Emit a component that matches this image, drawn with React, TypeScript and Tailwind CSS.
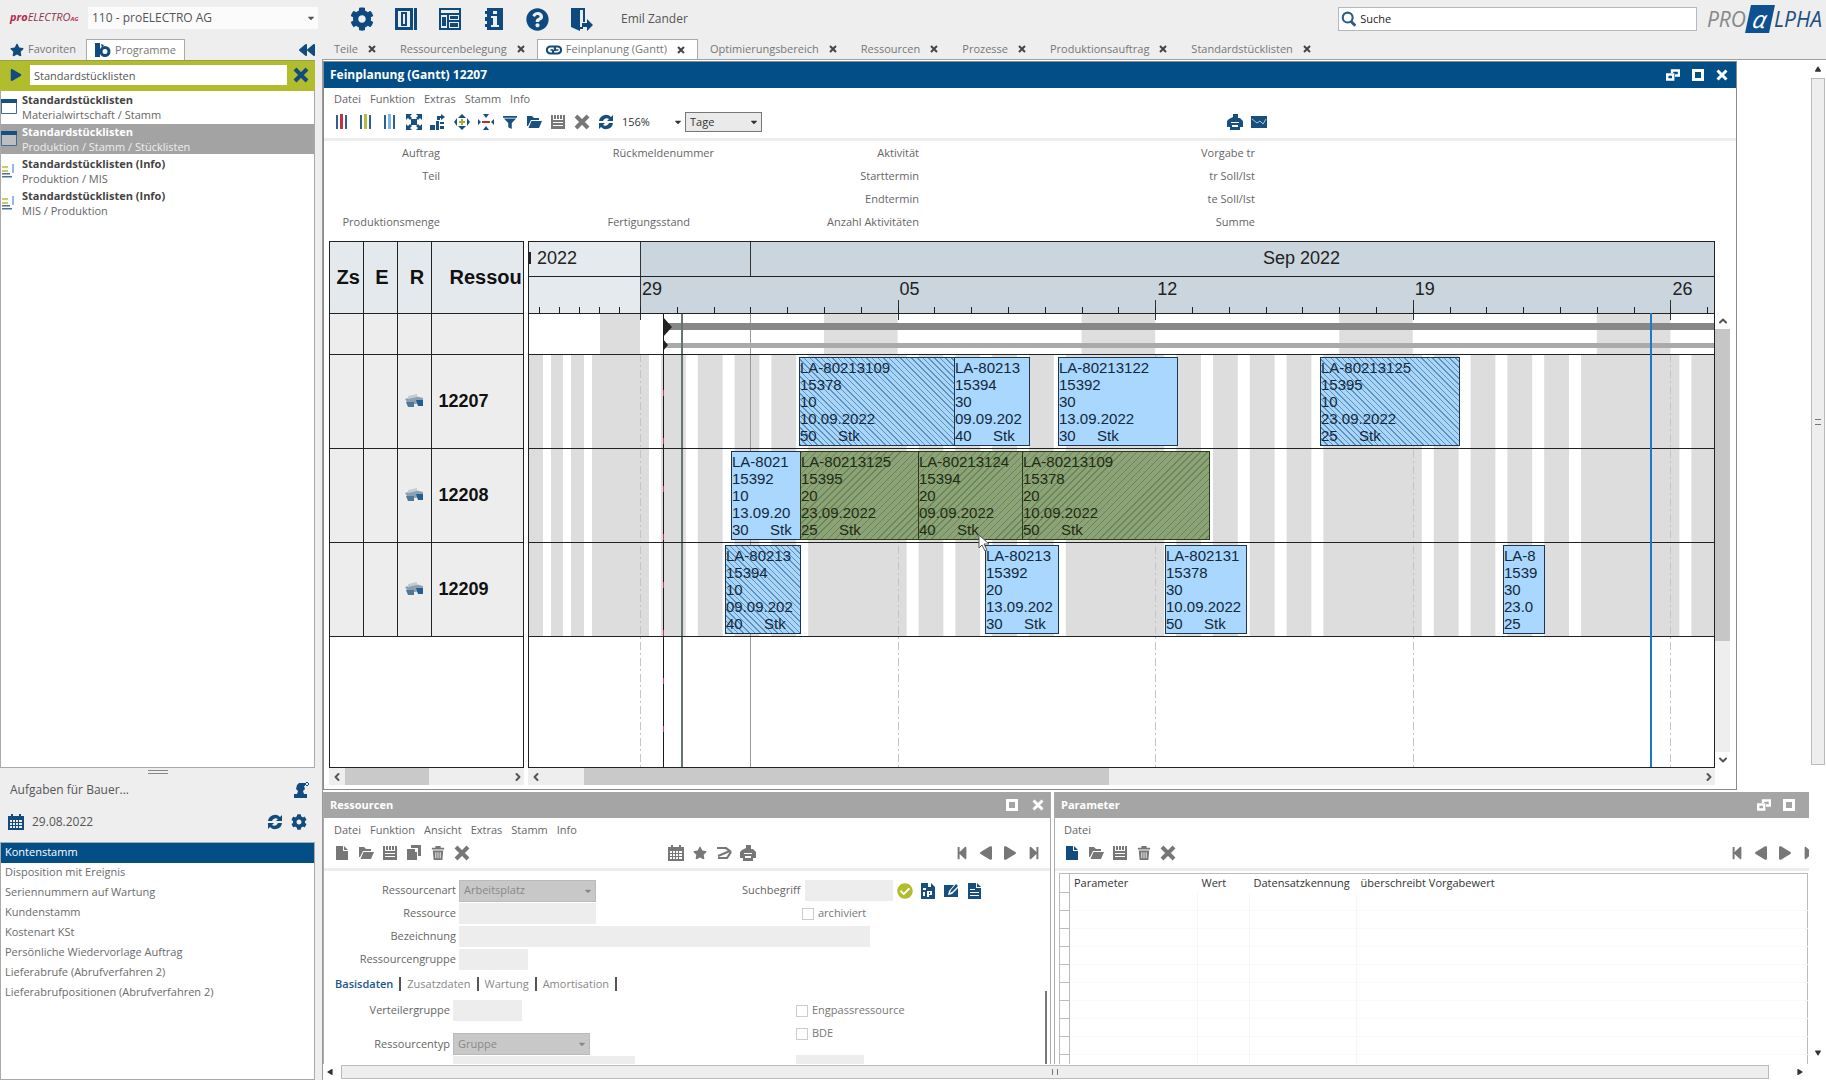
import type { ReactNode } from "react";
import {
  FaCog, FaQuestionCircle, FaStar, FaCaretDown, FaStepBackward, FaStepForward, FaPlay, FaCheckCircle, FaBackward,
} from "react-icons/fa";
import { ChevronDown, ChevronLeft, ChevronRight, ChevronUp } from "lucide-react";

interface Program {
  title: string;
  path: string;
  kind: "window" | "info";
  selected?: boolean;
}

interface Task {
  x: number;
  w: number;
  row: number;
  style: "plain" | "hatched" | "green";
  lines: string[];
  qty: string;
  unit: string;
}

const programs: Program[] = [
  { title: "Standardstücklisten", path: "Materialwirtschaft / Stamm", kind: "window" },
  { title: "Standardstücklisten", path: "Produktion / Stamm / Stücklisten", kind: "window", selected: true },
  { title: "Standardstücklisten (Info)", path: "Produktion / MIS", kind: "info" },
  { title: "Standardstücklisten (Info)", path: "MIS / Produktion", kind: "info" },
];

const todos = [
  "Kontenstamm", "Disposition mit Ereignis", "Seriennummern auf Wartung", "Kundenstamm", "Kostenart KSt",
  "Persönliche Wiedervorlage Auftrag", "Lieferabrufe (Abrufverfahren 2)", "Lieferabrufpositionen (Abrufverfahren 2)",
];

const tabs = [
  "Teile", "Ressourcenbelegung", "Feinplanung (Gantt)", "Optimierungsbereich", "Ressourcen",
  "Prozesse", "Produktionsauftrag", "Standardstücklisten",
];

const tasks: Task[] = [
  { x: 270, w: 156, row: 0, style: "hatched", lines: ["LA-80213109", "15378", "10", "10.09.2022"], qty: "50", unit: "Stk" },
  { x: 425, w: 76, row: 0, style: "plain", lines: ["LA-80213", "15394", "30", "09.09.202"], qty: "40", unit: "Stk" },
  { x: 529, w: 120, row: 0, style: "plain", lines: ["LA-80213122", "15392", "30", "13.09.2022"], qty: "30", unit: "Stk" },
  { x: 791, w: 140, row: 0, style: "hatched", lines: ["LA-80213125", "15395", "10", "23.09.2022"], qty: "25", unit: "Stk" },
  { x: 202, w: 70, row: 1, style: "plain", lines: ["LA-8021", "15392", "10", "13.09.20"], qty: "30", unit: "Stk" },
  { x: 271, w: 119, row: 1, style: "green", lines: ["LA-80213125", "15395", "20", "23.09.2022"], qty: "25", unit: "Stk" },
  { x: 389, w: 105, row: 1, style: "green", lines: ["LA-80213124", "15394", "20", "09.09.2022"], qty: "40", unit: "Stk" },
  { x: 493, w: 188, row: 1, style: "green", lines: ["LA-80213109", "15378", "20", "10.09.2022"], qty: "50", unit: "Stk" },
  { x: 196, w: 76, row: 2, style: "hatched", lines: ["LA-80213", "15394", "10", "09.09.202"], qty: "40", unit: "Stk" },
  { x: 456, w: 74, row: 2, style: "plain", lines: ["LA-80213", "15392", "20", "13.09.202"], qty: "30", unit: "Stk" },
  { x: 636, w: 82, row: 2, style: "plain", lines: ["LA-802131", "15378", "30", "10.09.2022"], qty: "50", unit: "Stk" },
  { x: 974, w: 42, row: 2, style: "plain", lines: ["LA-8", "1539", "30", "23.0"], qty: "25", unit: "" },
];

const taskStyles = {
  plain: "border-[#1d3550] bg-[#a9d7fd] text-[#14283c]",
  hatched: "border-[#1d3550] bg-[repeating-linear-gradient(45deg,#5c92bd_0_1px,#a9d5f8_1px_4px)] text-[#14283c]",
  green: "border-[#2c3b20] bg-[repeating-linear-gradient(135deg,#6c8557_0_1px,#8ca277_1px_5px)] text-[#1f2c14]",
};

// The calendar: first Monday of the fine scale and the width of a day
const FIRST_MONDAY = 111;
const DAY = 36.8;
const SUMMARY_TOP = 71;
const ROWS_TOP = 112;
const ROW_HEIGHT = 94;
const weeks = ["29", "05", "12", "19", "26"];
const resources = ["12207", "12208", "12209"];
const weekX = (week: number) => FIRST_MONDAY + week * 7 * DAY;

const iconPaths = {
  file: "M2 1h7v5h5v9H2zM10 1l4 4h-4z",
  folder: "M1 2h5l2 2h5v2H5L2 12H1zM5.500 7H16l-3 7H2.500z",
  save: "M1 1h2v5h10V1h2v14H1zM4 1h2v4H4zM7 1h2v4H7zM10 1h2v4h-2zM3 8v1h10V8zM3 11v1h10v-1z",
  copy: "M5 0h10v11h-3V3H5zM1 4h8v3h2v8H1z",
  trash: "M5 0h6v2h4v2H1V2h4zM2 5h12l-1 11H3zM5 7v7h1V7zM7.500 7v7h1V7zM10 7v7h1V7z",
  calendar: "M0 2h3V0h2v2h6V0h2v2h3v14H0zM2 6v2h2V6zM5 6v2h2V6zM8 6v2h2V6zM11 6v2h3V6zM2 9v2h2V9zM5 9v2h2V9zM8 9v2h2V9zM11 9v2h3V9zM2 12v2h2v-2zM5 12v2h2v-2zM8 12v2h2v-2zM11 12v2h3v-2z",
  print: "M4 4l2-1V0h5v4h2l3 3v6h-3v3H3v-3H0V7l2-2zM4 8v1h8V8zM5 11v2h6v-2z",
  filter: "M0 1h16v2H0zM1 4h14l-5 5v7l-4-2V9z",
  refresh: "M1 7a7 7 0 0112-4l2-2v6H9l2-2a4 4 0 00-6 2zM15 9a7 7 0 01-12 4l-2 2V9h6l-2 2a4 4 0 006-2z",
  user: "M8 1h4v3h-1l1 3-2 2 1 3h3v4H1v-4h3l1-3-2-2 1-4 2-2zM12 1h4v2h-4zM13 0h2v4h-2z",
  edit: "M1 2h10l-5 6-1 4 4-1 6-6v9H1zM13 1l2 2-6 6-2 1 1-3z",
  document: "M2 0h8v5h5v11H2zM11 0l4 4h-4zM4 6v1h5V6zM4 9v1h9V9zM4 12v1h9v-1z",
  texts: "M1 0h7v4h3V0l4 4v12H1zM3 5v2h3V5zM3 9v4h2V9zM7 8v6h2v-2h3V8H7zM9 9h1v2H9z",
};

function Icon({ name, className = "h-4 w-4" }: { name: keyof typeof iconPaths; className?: string }) {
  return (
    <svg viewBox="0 0 16 16" className={className} fill="currentColor">
      <path fillRule="evenodd" d={iconPaths[name]} />
    </svg>
  );
}

function ToolButton({ label, className = "", children }: { label: string; className?: string; children: ReactNode }) {
  return (
    <button type="button" aria-label={label} className={`flex h-4 w-4 shrink-0 items-center justify-center ${className}`}>
      {children}
    </button>
  );
}

function CrossIcon({ className = "" }: { className?: string }) {
  return (
    <svg viewBox="0 0 16 16" className={className} fill="none" stroke="currentColor" strokeWidth="4">
      <path d="M2 2l12 12M14 2L2 14" />
    </svg>
  );
}

function BarsIcon({ color }: { color: string }) {
  return (
    <svg viewBox="0 0 14 16" className="h-4 w-3.5">
      <path d="M1 1h2v14H1zM10 1h2v14h-2z" fill="#2f5f8c" />
      <path d="M5 0h3v15H5z" fill={color} />
    </svg>
  );
}

function FitIcon() {
  return (
    <svg viewBox="0 0 16 16" className="h-4 w-4" fill="#17507f">
      <path d="M0 0h6L4 2l2 2-2 2-2-2-2 2zM16 0v6l-2-2-2 2-2-2 2-2-2-2zM0 16v-6l2 2 2-2 2 2-2 2 2 2zM16 16h-6l2-2-2-2 2-2 2 2 2-2z" />
      <path d="M5 5h6v6H5z" />
    </svg>
  );
}

function StepsIcon() {
  return (
    <svg viewBox="0 0 16 16" className="h-4 w-4" fill="#17507f">
      <path d="M0 11h5v5H0zM6 7h3v9H6zM10 12h4v3h-4zM8 2h4v2h-2v2H7V2zM11 0l4 3-4 3zM10 8h4v2h-4z" />
    </svg>
  );
}

function SpreadIcon({ inward = false }: { inward?: boolean }) {
  return (
    <svg viewBox="0 0 16 16" className="h-4 w-4" fill="#17507f">
      {inward ? (
        <>
          <path d="M5 0h6L8 4zM5 16h6l-3-4zM0 5l3 3-3 3zM16 5l-3 3 3 3z" />
          <path d="M4 7h8v2H4z" fill="#c22b3b" />
        </>
      ) : (
        <>
          <path d="M8 0l4 4H4zM8 16l4-4H4zM0 8l3-4v8zM16 8l-3-4v8z" />
          <path d="M7 5h2v2h2v2H9v2H7V9H5V7h2z" fill="#a4b32a" />
        </>
      )}
    </svg>
  );
}

function LinkIcon() {
  return (
    <svg viewBox="0 0 18 14" className="h-3.5 w-4" fill="none" stroke="#124c7f" strokeWidth="2.400">
      <path d="M9 3H5a4 4 0 000 8h3V7M9 11h4a4 4 0 000-8h-3v5" />
      <path d="M5 7h3M10 7h4" strokeWidth="1.600" />
    </svg>
  );
}

function ProgramIcon({ kind }: { kind: Program["kind"] }) {
  if (kind === "window") {
    return (
      <svg viewBox="0 0 16 16" className="h-4 w-4 shrink-0">
        <path d="M0.500 1.500h15v13h-15z" fill="#fff" fillOpacity="0.300" stroke="#3f6d92" />
        <path d="M0 0h16v4H0z" fill="#17507f" />
      </svg>
    );
  }
  return (
    <svg viewBox="0 0 16 16" className="h-4 w-4 shrink-0">
      <path d="M1 3h6v2H1zM1 7h6v2H1z" fill="#c6ce6c" />
      <path d="M1 10h8v1.500H1zM1 13h10v1.500H1z" fill="#4a7393" />
      <path d="M11 1h2v9h-2z" fill="#8fbdeb" />
    </svg>
  );
}

function MachineIcon() {
  return (
    <svg viewBox="0 0 20 16" className="ml-1.5 h-4 w-5">
      <path d="M1 6l10-3 8 2v5l-8 1-8-2z" fill="#8ba0b1" />
      <path d="M2 9h8v5H4z" fill="#4d7898" />
      <path d="M12 7h7v6h-5z" fill="#215e91" />
      <path d="M4 3l9-2v3L4 6z" fill="#c3ccd3" />
    </svg>
  );
}

function RestoreIcon() {
  return (
    <svg viewBox="0 0 14 12" className="h-3 w-3.5" fill="none" stroke="currentColor" strokeWidth="2.400">
      <path d="M1.200 5.500h6v5h-6zM6 4V1.500h7v5H9" />
    </svg>
  );
}

function MaximizeIcon() {
  return (
    <svg viewBox="0 0 12 12" className="h-3 w-3" fill="none" stroke="currentColor" strokeWidth="3">
      <path d="M1.500 1.500h9v9h-9z" />
    </svg>
  );
}

function MenuBar({ items }: { items: string[] }) {
  return (
    <nav className="flex gap-[9px] text-[11px] leading-4 text-[#666]">
      {items.map(item => <button key={item} type="button">{item}</button>)}
    </nav>
  );
}

function SelectBox({ label, value, id, className = "" }: { label: string; value: string; id?: string; className?: string }) {
  return (
    <div className={`grid items-center ${className}`}>
      <select
        id={id}
        aria-label={label}
        defaultValue={value}
        className="col-start-1 row-start-1 h-full w-full appearance-none bg-transparent px-1 outline-none"
      >
        <option>{value}</option>
      </select>
      <FaCaretDown className="pointer-events-none col-start-1 row-start-1 mr-0.5 h-2.5 w-2.5 justify-self-end" />
    </div>
  );
}

function Header() {
  return (
    <header className="flex h-[39px] shrink-0 items-start bg-[#eee] text-xs text-[#555]">
      <div className="flex w-[322px] shrink-0 items-center pt-[7px]">
        <span className="w-[88px] pl-2.5 text-[11px] font-bold italic leading-5 text-[#b5274c]">
          pro<span className="font-normal text-[#8d3349]">ELECTRO</span>
          <span className="text-[6px]">AG</span>
        </span>
        <SelectBox label="Firma" value="110 - proELECTRO AG" className="h-[22px] w-[230px] bg-[#fbfbfb] text-[12px]" />
      </div>
      <div className="flex flex-1 items-center pt-[5px]">
        <div className="flex items-center gap-5 pl-7 text-[#0e4a80]">
          <button type="button" aria-label="Einstellungen"><FaCog className="h-6 w-6" /></button>
          <button type="button" aria-label="Spalten">
            <svg viewBox="0 0 24 24" className="h-6 w-6" fill="currentColor">
              <path fillRule="evenodd" d="M1 1h18v22H1zM4 4v16h12V4zM20 1h3v22h-3zM7 5h6v14H7zM9 7v10h2V7z" />
            </svg>
          </button>
          <button type="button" aria-label="Layout">
            <svg viewBox="0 0 24 24" className="h-6 w-6" fill="currentColor">
              <path fillRule="evenodd" d="M1 1h22v22H1zM3 3v3h18V3zM3 8v13h6V8zM11 8v5h10V8zM11 15v6h10v-6z" />
              <path d="M4 10h4v9H4zM12 9h8v3h-8zM12 16h8v4h-8z" />
            </svg>
          </button>
          <button type="button" aria-label="Info">
            <svg viewBox="0 0 24 24" className="h-6 w-6" fill="currentColor">
              <path fillRule="evenodd" d="M5 1h16v22H5v-3H3v-3h2v-3H3v-4h2V7H3V4h2zM11 4v3h4V4zM9 9v2h2v7H9v2h8v-2h-2V9z" />
            </svg>
          </button>
          <button type="button" aria-label="Hilfe"><FaQuestionCircle className="h-[23px] w-[23px]" /></button>
          <button type="button" aria-label="Abmelden">
            <svg viewBox="0 0 24 24" className="h-6 w-6" fill="currentColor">
              <path fillRule="evenodd" d="M2 1h14v14h-2V3h-3v17h3v2h-3v2L2 20z" />
              <path d="M13 16h5v-4l6 6-6 6v-4h-5z" />
            </svg>
          </button>
        </div>
        <span className="pl-7 text-[12px]">Emil Zander</span>
        <label className="ml-auto flex h-6 w-[359px] items-center border border-[#b5b9bd] bg-white pl-0.5">
          <svg viewBox="0 0 16 16" className="h-4 w-4" fill="none" stroke="#2c5c88" strokeWidth="2.200">
            <circle cx="7" cy="6.500" r="5.200" />
            <path d="M10 10l5 5" strokeWidth="3" />
          </svg>
          <input aria-label="Suche" defaultValue="Suche" className="w-full bg-transparent pl-1 text-[11px] text-[#222] outline-none" />
        </label>
        <div className="ml-2.5 mr-1 flex h-7 items-center text-[21px] font-medium italic text-[#1d4f80]">
          <span className="font-normal text-[#888]">PRO</span>
          <span className="mx-0.5 flex h-7 w-6 -skew-x-12 items-center justify-center bg-[#0e5190] text-[24px] text-white">α</span>
          <span>LPHA</span>
        </div>
      </div>
    </header>
  );
}

function Sidebar() {
  return (
    <aside className="flex w-[322px] shrink-0 flex-col bg-[#eee] pr-[7px] text-[11px] text-[#555]">
      <div className="flex h-[21px] shrink-0 items-center">
        <button type="button" className="flex items-center gap-1 pl-2.5 pr-2.5 text-[#777]">
          <FaStar className="h-3.5 w-3.5 text-[#124c7f]" />Favoriten
        </button>
        <button type="button" className="flex h-full items-center gap-1 border border-b-0 border-[#aaa] bg-white px-2 text-[#777]">
          <svg viewBox="0 0 16 14" className="h-3.5 w-4" fill="#124c7f">
            <path d="M0 0h5v14H0zM6 1l3 1-2 3z" />
            <path fillRule="evenodd" d="M10 3a5.500 5.500 0 100 11 5.500 5.500 0 000-11zm0 3a2.500 2.500 0 110 5 2.500 2.500 0 010-5z" />
          </svg>
          Programme
        </button>
        <button type="button" aria-label="Einklappen" className="ml-auto text-[#124c7f]"><FaBackward className="h-4 w-4" /></button>
      </div>
      <div className="flex h-[31px] shrink-0 items-start border-t border-[#9a9f4f] bg-[#b1bd2c] pt-1 text-[#124c7f]">
        <button type="button" aria-label="Starten" className="py-1 pl-2.5"><FaPlay className="h-3 w-3" /></button>
        <input
          aria-label="Programm suchen"
          defaultValue="Standardstücklisten"
          className="ml-2 h-5 min-w-0 flex-1 bg-white px-1 text-[11px] text-[#555] outline-none"
        />
        <button type="button" aria-label="Leeren" className="px-1.5 py-0.5"><CrossIcon className="h-4 w-4" /></button>
      </div>
      <ul className="min-h-0 flex-1 border-x border-b border-[#aaa] bg-white pt-px">
        {programs.map(p => (
          <li
            key={p.title + p.path}
            className={`mb-0.5 flex h-[30px] items-center gap-[5px] ${p.selected ? "bg-[#a3a3a3] text-[#eee]" : "text-[#666]"}`}
          >
            <ProgramIcon kind={p.kind} />
            <div className="leading-[15px]">
              <div className={`font-bold ${p.selected ? "text-white" : "text-[#444]"}`}>{p.title}</div>
              <div>{p.path}</div>
            </div>
          </li>
        ))}
      </ul>
      <div className="flex h-[74px] shrink-0 flex-col">
        <div className="mx-auto mt-0.5 h-1 w-5 border-y border-[#888]" />
        <div className="flex h-8 items-center justify-between pl-2.5 pr-1.5 text-[12px]">
          <span>Aufgaben für Bauer...</span>
          <ToolButton label="Benutzer zuordnen" className="text-[#124c7f]"><Icon name="user" /></ToolButton>
        </div>
        <div className="flex h-8 items-center pl-2 pr-2 text-[#124c7f]">
          <Icon name="calendar" />
          <span className="flex-1 pl-2 text-[12px] text-[#555]">29.08.2022</span>
          <ToolButton label="Aktualisieren"><Icon name="refresh" /></ToolButton>
          <ToolButton label="Einstellungen" className="ml-2"><FaCog className="h-4 w-4" /></ToolButton>
        </div>
      </div>
      <ul className="h-[238px] shrink-0 border border-[#aaa] bg-white text-[11px] leading-[18px] text-[#6b6b6b]">
        {todos.map((t, i) => (
          <li key={t} className={`h-5 pl-1 ${i === 0 ? "bg-[#044e87] text-white" : ""}`}>{t}</li>
        ))}
      </ul>
    </aside>
  );
}

function TabStrip() {
  return (
    <div className="flex h-[21px] shrink-0 items-stretch border-b border-[#9aa3ab] bg-[#eee] text-[11px] text-[#777]">
      {tabs.map(tab => {
        const active = tab.startsWith("Feinplanung");
        return (
          <div
            key={tab}
            className={active
              ? "flex items-center gap-2.5 border border-b-0 border-[#aaa] bg-white pl-2 pr-3"
              : "flex items-center gap-2.5 px-3"}
          >
            <button type="button" className="flex items-center gap-1">{active && <LinkIcon />}{tab}</button>
            <button type="button" aria-label={`${tab} schließen`} className="text-[#444]"><CrossIcon className="h-2 w-2" /></button>
          </div>
        );
      })}
    </div>
  );
}

function TimelineChart() {
  const days = Array.from({ length: 30 }, (_, i) => i);
  const workDays = days.filter(d => d % 7 < 5);
  return (
    <svg className="absolute inset-0 h-full w-full">
      <rect width="100%" height={SUMMARY_TOP} fill="#cad5de" />
      <rect width="111" height={SUMMARY_TOP} fill="#e5eaee" />
      <rect x="71" y={SUMMARY_TOP} width="40" height="41" fill="#ddd" />
      {[0, 1, 2, 3].map(w => (
        <rect key={w} x={weekX(w) + 5 * DAY} y={SUMMARY_TOP} width={2 * DAY} height="41" fill="#dedede" />
      ))}
      {resources.map((r, i) => (
        <g key={r}>
          <rect y={ROWS_TOP + i * ROW_HEIGHT} width="100%" height={ROW_HEIGHT} fill="#ddd" />
          {[14, 34, 55].map(x => (
            <rect key={x} x={x} y={ROWS_TOP + i * ROW_HEIGHT} width="8" height={ROW_HEIGHT} fill="#fff" />
          ))}
          {workDays.map(d => (
            <rect key={d} x={FIRST_MONDAY + d * DAY + 9} y={ROWS_TOP + i * ROW_HEIGHT} width="12" height={ROW_HEIGHT} fill="#fff" />
          ))}
        </g>
      ))}
      {weeks.map((w, i) => (
        <g key={w}>
          <path d={`M${Math.round(weekX(i))}.5 112V600`} stroke="#c4c4c4" strokeDasharray="8 3 2 3" />
          <path d={`M${Math.round(weekX(i))}.5 ${i === 0 ? 0 : 58}V78`} stroke="#333" />
        </g>
      ))}
      {days.map(d => (
        <path key={d} d={`M${Math.round(FIRST_MONDAY + d * DAY)}.5 65V71`} stroke="#222" />
      ))}
      {[10, 30, 50, 70, 90].map(x => <path key={x} d={`M${x}.5 65V71`} stroke="#222" />)}
      <path d="M221.500 0V34" stroke="#333" />
      <path d="M221.500 71V600" stroke="#999" />
      <rect x="134" y="81" width="100%" height="7" fill="#878787" />
      <rect x="134" y="101" width="100%" height="5" fill="#aaa" />
      <path d="M134 75l9 10-9 10zM134 97l5 6-5 6z" fill="#222" />
      <path d="M134.500 71V600" stroke="#1a1a1a" />
      <path d="M134.500 148V600" stroke="#c43a52" strokeDasharray="6 42" />
      <path d="M153 71V600" stroke="#66766a" strokeWidth="2" />
      <path d="M0 34.500H3000M0 71.500H3000M0 112.500H3000M0 206.500H3000M0 300.500H3000M0 394.500H3000" stroke="#222" />
      <path d="M1122 71V600" stroke="#1f78c6" strokeWidth="2" />
    </svg>
  );
}

function Timeline() {
  return (
    <div className="relative min-w-0 flex-1 overflow-hidden border border-[#222] bg-white font-['Liberation_Sans',Arial,sans-serif]">
      <TimelineChart />
      <span className="absolute left-2 top-1.5 text-[18px] leading-5 text-[#222]">2022</span>
      <span className="absolute left-0 top-2.5 h-3 w-0.5 bg-[#222]" />
      <span className="absolute left-[734px] top-1.5 text-[18px] leading-5 text-[#222]">Sep 2022</span>
      {weeks.map((w, i) => (
        <span key={w} className="absolute top-[37px] text-[18px] leading-5 text-[#222]" style={{ left: weekX(i) + 2 }}>{w}</span>
      ))}
      {tasks.map(t => (
        <div
          key={`${t.row}-${t.x}`}
          className={`absolute flex h-[89px] flex-col border pt-px text-[15px] leading-[17px] ${taskStyles[t.style]}`}
          style={{ left: t.x, top: ROWS_TOP + 3 + t.row * ROW_HEIGHT, width: t.w }}
        >
          {t.lines.map(line => <div key={line} className="whitespace-nowrap">{line}</div>)}
          <div className="flex"><span className="w-[38px]">{t.qty}</span>{t.unit}</div>
        </div>
      ))}
      <svg viewBox="0 0 12 18" className="absolute left-[449px] top-[292px] h-[18px] w-3">
        <path d="M1 1v13l3-3 3 6 2-1-3-6h5z" fill="#fff" stroke="#555" />
      </svg>
    </div>
  );
}

function ResourceTable() {
  return (
    <div className="w-[195px] shrink-0 overflow-hidden border border-[#222] bg-white font-['Liberation_Sans',Arial,sans-serif]">
      <table className="w-full table-fixed border-collapse text-[#111]">
        <thead>
          <tr className="h-[71px] border-b border-[#222] bg-[#e4e9ed] text-[20px]">
            <th className="w-[33px] border-r border-[#222] pl-1">Zs</th>
            <th className="w-[34px] border-r border-[#222] pl-1">E</th>
            <th className="w-[34px] border-r border-[#222] pl-1.5">R</th>
            <th className="overflow-hidden pl-[18px] text-left">Ressou</th>
          </tr>
        </thead>
        <tbody className="bg-[#ededed]">
          <tr className="h-[41px] border-b border-[#222]">
            <td className="border-r border-[#222]" />
            <td className="border-r border-[#222]" />
            <td className="border-r border-[#222]" />
            <td />
          </tr>
          {resources.map(r => (
            <tr key={r} className="h-[94px] border-b border-[#222]">
              <td className="border-r border-[#222]" />
              <td className="border-r border-[#222]" />
              <td className="border-r border-[#222]"><MachineIcon /></td>
              <td className="pl-[7px] text-[18px] font-bold">{r}</td>
            </tr>
          ))}
        </tbody>
      </table>
    </div>
  );
}

function GanttToolbar() {
  return (
    <div className="flex h-6 items-center gap-2 text-[#17507f]">
      <ToolButton label="Rote Balken"><BarsIcon color="#c8323f" /></ToolButton>
      <ToolButton label="Grüne Balken"><BarsIcon color="#b5bd3c" /></ToolButton>
      <ToolButton label="Blaue Balken"><BarsIcon color="#7db4ea" /></ToolButton>
      <ToolButton label="Einpassen"><FitIcon /></ToolButton>
      <ToolButton label="Stufen"><StepsIcon /></ToolButton>
      <ToolButton label="Vergrößern"><SpreadIcon /></ToolButton>
      <ToolButton label="Verkleinern"><SpreadIcon inward /></ToolButton>
      <ToolButton label="Filter"><Icon name="filter" className="h-3.5 w-3.5" /></ToolButton>
      <ToolButton label="Öffnen"><Icon name="folder" /></ToolButton>
      <ToolButton label="Speichern" className="text-[#777]"><Icon name="save" /></ToolButton>
      <ToolButton label="Abbrechen" className="text-[#777]"><CrossIcon className="h-4 w-4" /></ToolButton>
      <ToolButton label="Aktualisieren"><Icon name="refresh" /></ToolButton>
      <SelectBox label="Zoom" value="156%" className="-ml-1 h-5 w-[67px] text-[11px] text-[#333]" />
      <SelectBox label="Einheit" value="Tage" className="-ml-2 h-5 w-[77px] border border-[#777] bg-[#eaeaea] text-[11px] text-[#333]" />
      <div className="flex gap-2 pl-[457px]">
        <ToolButton label="Drucken"><Icon name="print" /></ToolButton>
        <ToolButton label="Senden">
          <svg viewBox="0 0 16 12" className="h-3 w-4">
            <path d="M0 0h16v12H0z" fill="#17507f" />
            <path d="M1 3l5 4 3-2 3 3 3-5" fill="none" stroke="#a9c4da" />
          </svg>
        </ToolButton>
      </div>
    </div>
  );
}

function OrderInfo() {
  return (
    <div className="grid grid-cols-[110px_274px_205px_336px] text-right text-[11px] leading-[23px] text-[#666]">
      <span>Auftrag</span><span>Rückmeldenummer</span><span>Aktivität</span><span>Vorgabe tr</span>
      <span>Teil</span><span /><span>Starttermin</span><span>tr Soll/Ist</span>
      <span /><span /><span>Endtermin</span><span>te Soll/Ist</span>
      <span>Produktionsmenge</span><span className="pr-6">Fertigungsstand</span><span>Anzahl Aktivitäten</span><span>Summe</span>
    </div>
  );
}

function GanttWindow() {
  return (
    <section className="mr-[72px] flex min-h-0 flex-1 flex-col border border-[#8a8a8a] bg-white">
      <div className="flex h-[26px] shrink-0 items-center gap-3 bg-[#044e87] pl-1.5 pr-2 text-white">
        <h2 className="flex-1 text-[12px] font-bold">Feinplanung (Gantt) 12207</h2>
        <button type="button" aria-label="Wiederherstellen"><RestoreIcon /></button>
        <button type="button" aria-label="Maximieren"><MaximizeIcon /></button>
        <button type="button" aria-label="Schließen"><CrossIcon className="h-3 w-3" /></button>
      </div>
      <div className="shrink-0 border-b-3 border-[#ededed] pb-1 pl-2.5 pt-[3px]">
        <MenuBar items={["Datei", "Funktion", "Extras", "Stamm", "Info"]} />
        <div className="pt-[3px]"><GanttToolbar /></div>
      </div>
      <div className="shrink-0 pb-[7px] pl-1.5"><OrderInfo /></div>
      <div className="flex min-h-0 flex-1 gap-1 pl-[5px] pt-px">
        <ResourceTable />
        <div className="flex min-w-0 flex-1">
          <Timeline />
          <div className="mr-1.5 flex w-[15px] shrink-0 flex-col items-center pt-[72px] text-[#555]">
            <ChevronUp className="my-0.5 h-3 w-3" strokeWidth={4} />
            <div className="h-[312px] w-full bg-[#c6c6c6]" />
            <div className="w-full flex-1 bg-[#eee]" />
            <ChevronDown className="my-0.5 h-3 w-3" strokeWidth={4} />
          </div>
        </div>
      </div>
      <div className="mb-1 flex h-[17px] shrink-0 gap-1 pl-[5px] pr-[21px] text-[#555]">
        <div className="flex w-[195px] items-center bg-[#eee]">
          <ChevronLeft className="mx-0.5 h-3 w-3" strokeWidth={4} />
          <div className="h-full w-[84px] bg-[#c9c9c9]" />
          <ChevronRight className="ml-auto h-3 w-3" strokeWidth={4} />
        </div>
        <div className="flex flex-1 items-center bg-[#eee]">
          <ChevronLeft className="mx-0.5 h-3 w-3" strokeWidth={4} />
          <div className="ml-10 h-full w-[525px] bg-[#c9c9c9]" />
          <ChevronRight className="ml-auto h-3 w-3" strokeWidth={4} />
        </div>
      </div>
    </section>
  );
}

function NavButtons() {
  return (
    <div className="flex gap-2">
      <ToolButton label="Erster"><FaStepBackward className="h-3.5 w-3.5" /></ToolButton>
      <ToolButton label="Zurück"><FaPlay className="h-3.5 w-3 rotate-180" /></ToolButton>
      <ToolButton label="Weiter"><FaPlay className="h-3.5 w-3" /></ToolButton>
      <ToolButton label="Letzter"><FaStepForward className="h-3.5 w-3.5" /></ToolButton>
    </div>
  );
}

function FormField({ id, label, labelWidth, width }: { id: string; label: string; labelWidth: string; width: string }) {
  return (
    <div className="flex h-[23px] items-center">
      <label htmlFor={id} className={`${labelWidth} shrink-0 pr-[3px] text-right`}>{label}</label>
      <input id={id} disabled className={`h-[21px] shrink-0 ${width} bg-[#ededed]`} />
    </div>
  );
}

function CheckField({ label }: { label: string }) {
  return (
    <label className="flex items-center gap-1 text-[#777]">
      <input type="checkbox" disabled className="h-3 w-3 appearance-none border border-[#ccc] bg-white" />
      {label}
    </label>
  );
}

function ResourcePanel() {
  return (
    <section className="flex w-[728px] shrink-0 flex-col overflow-hidden border-x border-[#aaa] bg-white text-[11px] text-[#666]">
      <div className="flex h-[26px] shrink-0 items-center gap-3.5 bg-[#a5a5a5] pl-1.5 pr-1.5 text-white">
        <h2 className="flex-1 font-bold">Ressourcen</h2>
        <button type="button" aria-label="Maximieren"><MaximizeIcon /></button>
        <button type="button" aria-label="Schließen"><CrossIcon className="h-3 w-3" /></button>
      </div>
      <div className="border-b-3 border-[#ededed] pl-2.5 pr-2 pt-1">
        <MenuBar items={["Datei", "Funktion", "Ansicht", "Extras", "Stamm", "Info"]} />
        <div className="flex h-[30px] items-center gap-2 text-[#777]">
          <ToolButton label="Neu"><Icon name="file" /></ToolButton>
          <ToolButton label="Öffnen"><Icon name="folder" /></ToolButton>
          <ToolButton label="Speichern"><Icon name="save" /></ToolButton>
          <ToolButton label="Kopieren"><Icon name="copy" /></ToolButton>
          <ToolButton label="Löschen"><Icon name="trash" className="h-3.5 w-3.5" /></ToolButton>
          <ToolButton label="Abbrechen"><CrossIcon className="h-4 w-4" /></ToolButton>
          <div className="flex flex-1 justify-center gap-2">
            <ToolButton label="Kalender"><Icon name="calendar" /></ToolButton>
            <ToolButton label="Favorit"><FaStar className="h-3.5 w-3.5" /></ToolButton>
            <ToolButton label="Verknüpfung">
              <svg viewBox="0 0 16 14" className="h-3.5 w-4" fill="none" stroke="currentColor" strokeWidth="2.200">
                <path d="M1 2h9l4 3-12 5M2 12h9l4-6" />
              </svg>
            </ToolButton>
            <ToolButton label="Drucken"><Icon name="print" /></ToolButton>
          </div>
          <NavButtons />
        </div>
      </div>
      <div className="flex pt-2">
        <div className="w-[418px] shrink-0">
          <div className="flex h-[23px] items-center">
            <label htmlFor="ressourcenart" className="w-[135px] shrink-0 pr-[3px] text-right">Ressourcenart</label>
            <SelectBox id="ressourcenart" label="Ressourcenart" value="Arbeitsplatz" className="h-[22px] w-[137px] border border-[#bbb] bg-[#c8c8c8] text-[#888]" />
          </div>
          <FormField id="ressource" label="Ressource" labelWidth="w-[135px]" width="w-[137px]" />
          <FormField id="bezeichnung" label="Bezeichnung" labelWidth="w-[135px]" width="w-[411px]" />
          <FormField id="gruppe" label="Ressourcengruppe" labelWidth="w-[135px]" width="w-[69px]" />
        </div>
        <div>
          <div className="flex h-[23px] items-center">
            <label htmlFor="suchbegriff" className="pr-[5px]">Suchbegriff</label>
            <input id="suchbegriff" disabled className="h-[21px] w-[88px] bg-[#ededed]" />
            <div className="flex gap-[7px] pl-1 text-[#17507f]">
              <ToolButton label="Bestätigt" className="text-[#b1bd2c]"><FaCheckCircle className="h-4 w-4" /></ToolButton>
              <ToolButton label="Texte"><Icon name="texts" /></ToolButton>
              <ToolButton label="Bearbeiten"><Icon name="edit" /></ToolButton>
              <ToolButton label="Dokument"><Icon name="document" /></ToolButton>
            </div>
          </div>
          <div className="flex h-[23px] items-center pl-[60px]"><CheckField label="archiviert" /></div>
        </div>
      </div>
      <div className="mt-1.5 flex h-4 items-center pl-[11px] text-[#888]">
        <button type="button" className="border-r-2 border-[#555] pr-1.5 font-semibold leading-[14px] text-[#17568c]">Basisdaten</button>
        <button type="button" className="border-r-2 border-[#555] px-1.5 leading-[14px]">Zusatzdaten</button>
        <button type="button" className="border-r-2 border-[#555] px-1.5 leading-[14px]">Wartung</button>
        <button type="button" className="border-r-2 border-[#555] px-1.5 leading-[14px]">Amortisation</button>
      </div>
      <div className="mr-[3px] flex flex-1 border-r-2 border-[#777] pt-2">
        <div className="w-[472px] shrink-0">
          <FormField id="verteiler" label="Verteilergruppe" labelWidth="w-[129px]" width="w-[69px]" />
          <div className="mt-2.5 flex h-6 items-center">
            <label htmlFor="ressourcentyp" className="w-[129px] shrink-0 pr-[3px] text-right">Ressourcentyp</label>
            <SelectBox id="ressourcentyp" label="Ressourcentyp" value="Gruppe" className="h-[22px] w-[137px] border border-[#bbb] bg-[#c8c8c8] text-[#888]" />
          </div>
          <div className="ml-[129px] h-3 w-[182px] bg-[#ededed]" />
        </div>
        <div className="flex flex-col">
          <div className="flex h-[23px] items-center"><CheckField label="Engpassressource" /></div>
          <div className="flex h-[23px] items-center"><CheckField label="BDE" /></div>
          <div className="mt-2.5 h-3 w-[68px] bg-[#ededed]" />
        </div>
      </div>
    </section>
  );
}

function ParameterPanel() {
  const emptyRows = Array.from({ length: 10 }, (_, i) => i);
  return (
    <section className="flex min-w-0 flex-1 flex-col overflow-hidden border-l border-[#aaa] bg-white text-[11px] text-[#666]">
      <div className="flex h-[26px] shrink-0 items-center gap-3 bg-[#a5a5a5] pl-1.5 pr-3.5 text-white">
        <h2 className="flex-1 font-bold">Parameter</h2>
        <button type="button" aria-label="Wiederherstellen"><RestoreIcon /></button>
        <button type="button" aria-label="Maximieren"><MaximizeIcon /></button>
      </div>
      <div className="shrink-0 border-b-3 border-[#ededed] pl-[9px] pt-1">
        <MenuBar items={["Datei"]} />
        <div className="-mr-2 flex h-[30px] items-center gap-2 text-[#777]">
          <ToolButton label="Neu" className="text-[#124c7f]"><Icon name="file" /></ToolButton>
          <ToolButton label="Öffnen"><Icon name="folder" /></ToolButton>
          <ToolButton label="Speichern"><Icon name="save" /></ToolButton>
          <ToolButton label="Löschen"><Icon name="trash" className="h-3.5 w-3.5" /></ToolButton>
          <ToolButton label="Abbrechen"><CrossIcon className="h-4 w-4" /></ToolButton>
          <div className="ml-auto"><NavButtons /></div>
        </div>
      </div>
      <div className="min-h-0 flex-1 overflow-hidden pl-1 pr-px pt-0.5">
        <table className="w-full table-fixed border-collapse border-x border-t border-[#bbb]">
          <thead>
            <tr className="h-[19px] text-left text-[#333]">
              <th className="w-2.5 border-b border-r border-[#bbb]" />
              <th className="w-32 pl-1 font-normal">Parameter</th>
              <th className="w-[52px] pl-1 font-normal">Wert</th>
              <th className="w-[107px] pl-1 font-normal">Datensatzkennung</th>
              <th className="pl-1 font-normal">überschreibt Vorgabewert</th>
            </tr>
          </thead>
          <tbody>
            {emptyRows.map(r => (
              <tr key={r} className="h-[18px] border-b border-[#fafafa]">
                <td className="border-b border-r border-[#bbb]" />
                <td className="border-r border-[#f6f6f6]" />
                <td className="border-r border-[#f6f6f6]" />
                <td className="border-r border-[#f6f6f6]" />
                <td />
              </tr>
            ))}
          </tbody>
        </table>
      </div>
    </section>
  );
}

export default function App() {
  return (
    <div className="flex h-screen flex-col overflow-hidden bg-[#eee] font-['Open_Sans','Noto_Sans',sans-serif]">
      <Header />
      <div className="flex min-h-0 flex-1">
        <Sidebar />
        <main className="flex min-w-0 flex-1 flex-col">
          <TabStrip />
          <div className="flex min-h-0 flex-1 border-l border-[#999] bg-white">
            <div className="flex min-w-0 flex-1 flex-col pt-px">
              <GanttWindow />
              <div className="mt-0.5 flex h-[272px] shrink-0 gap-[3px]">
                <ResourcePanel />
                <ParameterPanel />
              </div>
              <div className="flex h-4 shrink-0 items-center text-[#333]">
                <FaPlay className="mx-1 h-1.5 w-1.5 rotate-180" />
                <div className="ml-1 flex h-3.5 flex-1 items-center justify-center border border-[#bbb] bg-[#eee]">
                  <span className="h-1.5 w-1.5 border-x border-[#777]" />
                </div>
                <FaPlay className="ml-7 mr-1.5 h-1.5 w-1.5" />
              </div>
            </div>
            <div className="flex w-[17px] shrink-0 flex-col items-center text-[#333]">
              <FaPlay className="my-1.5 h-1.5 w-1.5 -rotate-90" />
              <div className="flex w-3.5 flex-1 items-center justify-center border border-[#bbb] bg-[#eee]">
                <span className="h-1.5 w-1.5 border-y border-[#777]" />
              </div>
              <FaPlay className="mb-6 mt-[285px] h-1.5 w-1.5 rotate-90" />
            </div>
          </div>
        </main>
      </div>
    </div>
  );
}
